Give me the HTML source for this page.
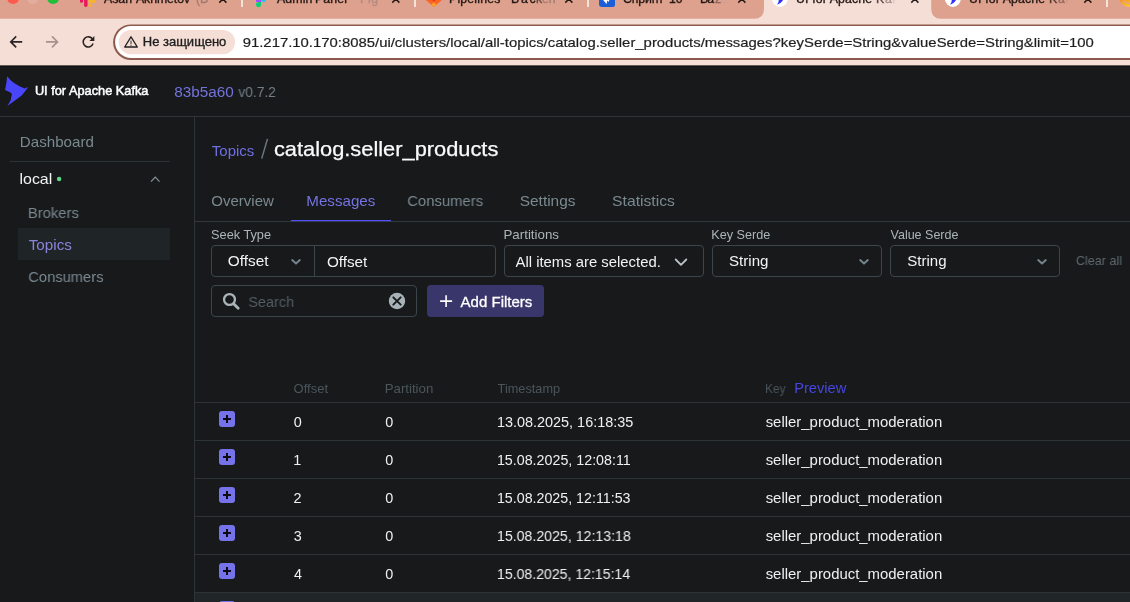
<!DOCTYPE html>
<html>
<head>
<meta charset="utf-8">
<title>UI for Apache Kafka</title>
<style>
html,body{margin:0;padding:0;}
body{width:1130px;height:602px;overflow:hidden;background:#18191b;font-family:"Liberation Sans",sans-serif;position:relative;}
.a{position:absolute;white-space:nowrap;line-height:1;}
div[id]{will-change:transform;}
.tabtxt{font-size:13px;color:#241815;top:-7.5px;letter-spacing:0.35px;}
.fade{color:#b98d82;}
.box{position:absolute;box-sizing:border-box;border:1px solid #3b464a;border-radius:4px;}
.hl{position:absolute;height:1px;background:#2c3437;}
.plus{position:absolute;left:219px;width:16px;height:16px;border-radius:3px;background:#7673ea;}
.plus:before{content:"";position:absolute;left:4.2px;top:7.1px;width:7.6px;height:1.8px;background:#0b0b10;}
.plus:after{content:"";position:absolute;left:7.1px;top:4.2px;width:1.8px;height:7.6px;background:#0b0b10;}
</style>
</head>
<body>
<!-- ===== Browser chrome (svg, fractional coords) ===== -->
<svg class="a" style="left:0;top:0;" width="1130" height="68" viewBox="0 0 1130 68">
  <rect x="0" y="0" width="1130" height="65.6" fill="#f5ded6"/>
  <rect x="0" y="65.6" width="1130" height="1.4" fill="#0e1012"/>
  <!-- salmon strip left/right of active tab -->
  <path d="M0 0 H764 V8.75 Q764 18.75 754 18.75 H0 Z" fill="#dea18e"/>
  <path d="M1130 0 H931.2 V8.75 Q931.2 18.75 941.2 18.75 H1130 Z" fill="#dea18e"/>
  <!-- traffic lights -->
  <circle cx="13.1" cy="-2.1" r="6" fill="#ff5a4f"/>
  <circle cx="32.9" cy="-2.1" r="6" fill="#e3ad9e"/>
  <circle cx="53.1" cy="-2.1" r="6" fill="#22bf3a"/>
  <!-- tab separators -->
  <rect x="241" y="-1" width="2" height="8" fill="#f4e2dc"/>
  <rect x="414" y="-1" width="2" height="8" fill="#f4e2dc"/>
  <rect x="587" y="-1" width="2" height="8" fill="#f4e2dc"/>
  <rect x="1106" y="-1" width="2" height="8" fill="#f4e2dc"/>
  <!-- slack favicon (bottom part) -->
  <rect x="80" y="-3" width="3.1" height="5.7" rx="1.55" fill="#e8185a"/>
  <rect x="84.1" y="-3" width="3.45" height="10" rx="1.7" fill="#e8185a"/>
  <rect x="88.5" y="-1" width="7.4" height="3.7" rx="1.7" fill="#f5b52a"/>
  <rect x="88.5" y="3.6" width="3.4" height="3.4" rx="1.7" fill="#f5b52a"/>
  <!-- figma favicon -->
  <rect x="256" y="-3" width="5" height="5" fill="#a64dff"/>
  <circle cx="263.55" cy="-0.45" r="2.55" fill="#18c2ff"/>
  <path d="M261 2 V4.6 a2.5 2.6 0 0 1 -5 0 a2.5 2.6 0 0 1 2.5 -2.6 Z" fill="#0bd078"/>
  <!-- gitlab favicon -->
  <path d="M425.8 0 L433.9 7 L442 0 V-4 H425.8 Z" fill="#fc6424"/>
  <path d="M431.6 -1 L433.9 2.1 L436.2 -1 Z" fill="#dc3a25"/>
  <path d="M433.9 2.3 L436.6 4.65 L433.9 7 L431.2 4.65 Z" fill="#fca024"/>
  <!-- jira favicon -->
  <path d="M599 -4 H615 V4.5 a2.5 2.5 0 0 1 -2.5 2.5 H601.5 a2.5 2.5 0 0 1 -2.5 -2.5 Z" fill="#1a5fd8"/>
  <path d="M602.2 -1 L606.6 4.1 L607.4 0.6 L608.8 2 L609.6 -1 Z" fill="#ffffff"/>
  <!-- kafka-ui favicons -->
  <circle cx="779.9" cy="-1" r="7.9" fill="#ffffff"/>
  <path d="M778.9 -1 L783.4 -1 L782.6 0.8 L780.5 3 L777.1 4.8 L778.5 2 Z" fill="#3030ff"/>
  <circle cx="952.9" cy="-1" r="7.9" fill="#ffffff"/>
  <path d="M951.9 -1 L956.4 -1 L955.6 0.8 L953.5 3 L950.1 4.8 L951.5 2 Z" fill="#3030ff"/>
  <!-- grafana favicon -->
  <defs><linearGradient id="gg" x1="0" y1="0" x2="0.4" y2="1"><stop offset="0.45" stop-color="#f6821f"/><stop offset="1" stop-color="#fdc52b"/></linearGradient></defs>
  <circle cx="1129.5" cy="-3.5" r="10.5" fill="url(#gg)"/>
  <circle cx="1129.5" cy="-3.5" r="7" fill="none" stroke="#e3a48d" stroke-width="1.4"/>
  <!-- close X glyphs (bottom halves) -->
  <g stroke="#241815" stroke-width="1.5" stroke-linecap="butt">
    <path d="M219.3 2.6 L226.4 -4.5 M226.4 2.6 L219.3 -4.5"/>
    <path d="M392.3 2.6 L399.4 -4.5 M399.4 2.6 L392.3 -4.5"/>
    <path d="M565.3 2.6 L572.4 -4.5 M572.4 2.6 L565.3 -4.5"/>
    <path d="M738.3 2.6 L745.4 -4.5 M745.4 2.6 L738.3 -4.5"/>
    <path d="M911.3 2.6 L918.4 -4.5 M918.4 2.6 L911.3 -4.5"/>
    <path d="M1084.3 2.6 L1091.4 -4.5 M1091.4 2.6 L1084.3 -4.5"/>
  </g>
  <!-- nav icons -->
  <g fill="none" stroke="#2b2422" stroke-width="1.6">
    <path d="M22.2 41.9 H11.4 M16.2 36.4 L10.7 41.9 L16.2 47.4"/>
    <path d="M92.6 39.2 A5.1 5.1 0 1 0 93.1 43.6"/>
  </g>
  <path d="M94.4 36 V41 H89.4 Z" fill="#2b2422"/>
  <g fill="none" stroke="#a8918b" stroke-width="1.6">
    <path d="M46 41.9 H56.8 M52 36.4 L57.5 41.9 L52 47.4"/>
  </g>
  <!-- omnibox -->
  <rect x="113.1" y="24.4" width="1060" height="35.6" rx="17.8" fill="#8c5b4d"/>
  <rect x="115.1" y="26" width="1060" height="32" rx="16" fill="#ffffff"/>
  <rect x="118.8" y="30" width="116.2" height="24.2" rx="12.1" fill="#f5ded6"/>
  <!-- warning triangle -->
  <path d="M131 36.8 L137.3 47 H124.7 Z" fill="none" stroke="#1f1f1f" stroke-width="1.3" stroke-linejoin="round"/>
  <rect x="130.4" y="40.6" width="1.2" height="3.4" fill="#555"/>
  <rect x="130.4" y="44.6" width="1.2" height="1.2" fill="#555"/>
</svg>

<!-- tab titles (cropped at top edge) -->

<!-- ===== App shell lines ===== -->
<div class="hl" style="left:0;top:116px;width:1130px;"></div>
<div class="a" style="left:194px;top:117px;width:1px;height:485px;background:#2c3437;"></div>
<svg class="a" style="left:0;top:70px;" width="40" height="40" viewBox="0 70 40 40"><path d="M7.2 76.3 Q10 80 13.3 82.6 Q18 86 24.6 88.6 L28.2 87.1 Q25 92 21.9 95.2 Q16 100 7.3 105.9 L10.6 100.6 L11.3 96.6 L12 94.6 Q11.5 93 10 92.3 L5 89.9 L6.3 83.3 Z" fill="#4946fa"/></svg>

<!-- sidebar -->
<div class="hl" style="left:10px;top:161px;width:160px;"></div>
<div class="a" style="left:18px;top:228px;width:152px;height:32px;background:#1f2426;"></div>
<svg class="a" style="left:50px;top:170px;" width="120" height="20" viewBox="50 170 120 20">
  <circle cx="59.1" cy="179" r="2.25" fill="#5cd685"/>
  <path d="M151 181.6 L155.25 177.2 L159.5 181.6" fill="none" stroke="#8b969b" stroke-width="1.15"/>
</svg>

<!-- breadcrumb slash -->
<svg class="a" style="left:258px;top:138px;" width="14" height="24" viewBox="258 138 14 24"><path d="M267.5 138.9 L261.7 158.6" stroke="#6a7880" stroke-width="1.5" fill="none"/></svg>

<!-- tabs line -->
<div class="hl" style="left:195px;top:221px;width:935px;background:#2f383c;"></div>
<div class="a" style="left:291px;top:220px;width:100px;height:1px;background:#5050ff;"></div>
<div class="a" style="left:291px;top:221px;width:100px;height:1px;background:#3a3f8a;opacity:.35;"></div>

<!-- filter boxes -->
<div class="box" style="left:211px;top:245px;width:285px;height:32px;"></div>
<div class="a" style="left:313.5px;top:246px;width:1px;height:30px;background:#3b464a;"></div>
<div class="box" style="left:504px;top:245px;width:200px;height:32px;"></div>
<div class="box" style="left:712px;top:245px;width:170px;height:32px;"></div>
<div class="box" style="left:890px;top:245px;width:170px;height:32px;"></div>
<div class="box" style="left:211px;top:285px;width:206px;height:32px;"></div>
<div class="a" style="left:427px;top:285px;width:117px;height:32px;border-radius:4px;background:#39366b;"></div>

<svg class="a" style="left:200px;top:250px;" width="900" height="70" viewBox="200 250 900 70">
  <g fill="none" stroke="#73848c" stroke-width="2" stroke-linecap="round" stroke-linejoin="round">
    <path d="M292.2 260.1 L296 263.6 L299.8 260.1"/>
    <path d="M860.2 260.1 L864 263.6 L867.8 260.1"/>
    <path d="M1038.2 260.1 L1042 263.6 L1045.8 260.1"/>
  </g>
  <path d="M675.7 259.5 L681 264.9 L686.3 259.5" fill="none" stroke="#b9c1c5" stroke-width="1.8" stroke-linecap="round" stroke-linejoin="round"/>
  <!-- search icon -->
  <circle cx="229.5" cy="299.5" r="5.45" fill="none" stroke="#abb5ba" stroke-width="2.3"/>
  <path d="M233.9 303.9 L238.2 308.2" stroke="#abb5ba" stroke-width="2.8" stroke-linecap="round"/>
  <!-- clear circle -->
  <circle cx="397" cy="301" r="8.2" fill="#a7b3b8"/>
  <path d="M393.3 297.3 L400.7 304.7 M400.7 297.3 L393.3 304.7" stroke="#18191b" stroke-width="1.9" stroke-linecap="round"/>
  <!-- plus in button -->
  <path d="M440.1 301.1 H452.1 M446.1 295.3 V306.9" stroke="#ffffff" stroke-width="1.6"/>
</svg>

<!-- table lines -->
<div class="hl" style="left:195px;top:402px;width:935px;"></div>
<div class="hl" style="left:195px;top:440px;width:935px;"></div>
<div class="hl" style="left:195px;top:478px;width:935px;"></div>
<div class="hl" style="left:195px;top:516px;width:935px;"></div>
<div class="hl" style="left:195px;top:554px;width:935px;"></div>
<div class="hl" style="left:195px;top:592px;width:935px;"></div>
<div class="a" style="left:195px;top:593px;width:935px;height:9px;background:#202627;"></div>
<div class="plus" style="top:411px;"></div>
<div class="plus" style="top:449px;"></div>
<div class="plus" style="top:487px;"></div>
<div class="plus" style="top:525px;"></div>
<div class="plus" style="top:563px;"></div>
<div class="plus" style="top:601px;"></div>

<div class="a" id="chip" style="left:142.00px;top:36.00px;font-size:12.3px;color:#1f1f1f;-webkit-text-stroke:0.35px #1f1f1f;transform:translateX(0.78px) scaleX(1.0566);transform-origin:0 0;">Не защищено</div>
<div class="a" id="url" style="left:242.00px;top:36.00px;font-size:13.6px;color:#1f1f1f;-webkit-text-stroke:0.2px #1f1f1f;transform:translateX(0.70px) scaleX(1.0939);transform-origin:0 0;">91.217.10.170:8085/ui/clusters/local/all-topics/catalog.seller_products/messages?keySerde=String&amp;valueSerde=String&amp;limit=100</div>
<div class="a" id="brand" style="left:34.00px;top:85.00px;font-size:12.6px;color:#ffffff;-webkit-text-stroke:0.5px #ffffff;transform:translateX(0.90px) scaleX(1.0138);transform-origin:0 0;">UI for Apache Kafka</div>
<div class="a" id="sha" style="left:174.00px;top:85.00px;font-size:14px;color:#7473dc;transform:translateX(0.22px) scaleX(1.0928);transform-origin:0 0;">83b5a60</div>
<div class="a" id="ver" style="left:238.00px;top:85.00px;font-size:14px;color:#73808a;transform:translateX(0.40px) scaleX(0.9822);transform-origin:0 0;">v0.7.2</div>
<div class="a" id="dash" style="left:19.00px;top:134.00px;font-size:15px;color:#7a8a91;transform:translateX(0.82px) scaleX(1.0089);transform-origin:0 0;">Dashboard</div>
<div class="a" id="local" style="left:19.00px;top:171.00px;font-size:15px;color:#f1f3f4;transform:translateX(0.50px) scaleX(1.0614);transform-origin:0 0;">local</div>
<div class="a" id="brok" style="left:27.00px;top:205.00px;font-size:15px;color:#7a8a91;transform:translateX(0.84px) scaleX(0.9872);transform-origin:0 0;">Brokers</div>
<div class="a" id="stop" style="left:28.00px;top:237.00px;font-size:15px;color:#8a84dc;transform:translateX(0.76px) scaleX(1.0140);transform-origin:0 0;">Topics</div>
<div class="a" id="scons" style="left:28.00px;top:269.00px;font-size:15px;color:#7a8a91;transform:translateX(0.31px) scaleX(0.9799);transform-origin:0 0;">Consumers</div>
<div class="a" id="ctop" style="left:211.00px;top:144.00px;font-size:14.6px;color:#6f6fe0;transform:translateX(0.87px) scaleX(1.0246);transform-origin:0 0;">Topics</div>
<div class="a" id="title" style="left:273.00px;top:139.00px;font-size:20.6px;color:#fafbfb;-webkit-text-stroke:0.25px #fafbfb;transform:translateX(0.92px) scaleX(1.0596);transform-origin:0 0;">catalog.seller_products</div>
<div class="a" id="t1" style="left:211.00px;top:193.00px;font-size:15px;color:#7a8a91;transform:translateX(0.30px) scaleX(1.0001);transform-origin:0 0;">Overview</div>
<div class="a" id="t2" style="left:306.00px;top:193.00px;font-size:15px;color:#7473e2;transform:translateX(0.32px) scaleX(1.0086);transform-origin:0 0;">Messages</div>
<div class="a" id="t3" style="left:407.00px;top:193.00px;font-size:15px;color:#7a8a91;transform:translateX(0.31px) scaleX(0.9878);transform-origin:0 0;">Consumers</div>
<div class="a" id="t4" style="left:519.00px;top:193.00px;font-size:15px;color:#7a8a91;transform:translateX(0.72px) scaleX(1.0289);transform-origin:0 0;">Settings</div>
<div class="a" id="t5" style="left:612.00px;top:193.00px;font-size:15px;color:#7a8a91;transform:translateX(0.11px) scaleX(1.0461);transform-origin:0 0;">Statistics</div>
<div class="a" id="l1" style="left:211.00px;top:229.00px;font-size:12.4px;color:#abb5ba;transform:translateX(0.10px) scaleX(1.0277);transform-origin:0 0;">Seek Type</div>
<div class="a" id="l2" style="left:503.00px;top:229.00px;font-size:12.4px;color:#abb5ba;transform:translateX(0.46px) scaleX(1.0748);transform-origin:0 0;">Partitions</div>
<div class="a" id="l3" style="left:711.00px;top:229.00px;font-size:12.4px;color:#abb5ba;transform:translateX(0.21px) scaleX(1.0207);transform-origin:0 0;">Key Serde</div>
<div class="a" id="l4" style="left:890.00px;top:229.00px;font-size:12.4px;color:#abb5ba;transform:translateX(0.50px) scaleX(1.0101);transform-origin:0 0;">Value Serde</div>
<div class="a" id="i1" style="left:227.00px;top:254.00px;font-size:14.8px;color:#f1f3f4;transform:translateX(0.78px) scaleX(1.0397);transform-origin:0 0;">Offset</div>
<div class="a" id="i2" style="left:326.00px;top:255.00px;font-size:14.8px;color:#f1f3f4;transform:translateX(0.88px) scaleX(1.0319);transform-origin:0 0;">Offset</div>
<div class="a" id="i3" style="left:515.00px;top:255.00px;font-size:14.8px;color:#f1f3f4;transform:translateX(0.50px) scaleX(1.0040);transform-origin:0 0;">All items are selected.</div>
<div class="a" id="i4" style="left:729.00px;top:254.00px;font-size:14.8px;color:#f1f3f4;transform:translateX(0.03px) scaleX(1.0196);transform-origin:0 0;">String</div>
<div class="a" id="i5" style="left:907.00px;top:254.00px;font-size:14.8px;color:#f1f3f4;transform:translateX(0.33px) scaleX(1.0142);transform-origin:0 0;">String</div>
<div class="a" id="clr" style="left:1075.00px;top:254.00px;font-size:13.2px;color:#5d696f;transform:translateX(0.91px) scaleX(0.9525);transform-origin:0 0;">Clear all</div>
<div class="a" id="srch" style="left:248.00px;top:295.00px;font-size:14.8px;color:#525e64;transform:translateX(0.35px) scaleX(0.9759);transform-origin:0 0;">Search</div>
<div class="a" id="addf" style="left:460.00px;top:295.00px;font-size:14.6px;color:#ffffff;-webkit-text-stroke:0.3px #ffffff;transform:translateX(0.60px) scaleX(1.0285);transform-origin:0 0;">Add Filters</div>
<div class="a" id="h1" style="left:293.00px;top:383.00px;font-size:12.4px;color:#4a565c;transform:translateX(0.49px) scaleX(1.0522);transform-origin:0 0;">Offset</div>
<div class="a" id="h2" style="left:384.00px;top:383.00px;font-size:12.4px;color:#4a565c;transform:translateX(0.66px) scaleX(1.0702);transform-origin:0 0;">Partition</div>
<div class="a" id="h3" style="left:497.00px;top:383.00px;font-size:12.4px;color:#4a565c;transform:translateX(0.60px) scaleX(1.0272);transform-origin:0 0;">Timestamp</div>
<div class="a" id="h4" style="left:764.00px;top:383.00px;font-size:12.4px;color:#4a565c;transform:translateX(0.96px) scaleX(0.9658);transform-origin:0 0;">Key</div>
<div class="a" id="h5" style="left:794.00px;top:381.00px;font-size:14.6px;color:#4646e0;transform:translateX(0.15px) scaleX(1.0066);transform-origin:0 0;">Preview</div>
<div class="a" id="r0o" style="left:293.00px;top:415.00px;font-size:14.4px;color:#eef0f1;transform:translateX(0.65px) scaleX(1.0000);transform-origin:0 0;">0</div>
<div class="a" id="r0p" style="left:385.00px;top:415.00px;font-size:14.4px;color:#eef0f1;transform:translateX(0.25px) scaleX(1.0000);transform-origin:0 0;">0</div>
<div class="a" id="r0t" style="left:496.00px;top:415.00px;font-size:14.2px;color:#eef0f1;transform:translateX(0.90px) scaleX(1.0168);transform-origin:0 0;">13.08.2025, 16:18:35</div>
<div class="a" id="r0k" style="left:765.00px;top:415.00px;font-size:14.2px;color:#eef0f1;transform:translateX(0.67px) scaleX(1.0508);transform-origin:0 0;">seller_product_moderation</div>
<div class="a" id="r1o" style="left:293.00px;top:453.00px;font-size:14.4px;color:#eef0f1;transform:translateX(0.20px) scaleX(1.0000);transform-origin:0 0;">1</div>
<div class="a" id="r1p" style="left:385.00px;top:453.00px;font-size:14.4px;color:#eef0f1;transform:translateX(0.25px) scaleX(1.0000);transform-origin:0 0;">0</div>
<div class="a" id="r1t" style="left:496.00px;top:453.00px;font-size:14.2px;color:#eef0f1;transform:translateX(0.91px) scaleX(1.0059);transform-origin:0 0;">15.08.2025, 12:08:11</div>
<div class="a" id="r1k" style="left:765.00px;top:453.00px;font-size:14.2px;color:#eef0f1;transform:translateX(0.67px) scaleX(1.0508);transform-origin:0 0;">seller_product_moderation</div>
<div class="a" id="r2o" style="left:293.00px;top:491.00px;font-size:14.4px;color:#eef0f1;transform:translateX(0.43px) scaleX(1.0000);transform-origin:0 0;">2</div>
<div class="a" id="r2p" style="left:385.00px;top:491.00px;font-size:14.4px;color:#eef0f1;transform:translateX(0.25px) scaleX(1.0000);transform-origin:0 0;">0</div>
<div class="a" id="r2t" style="left:496.00px;top:491.00px;font-size:14.2px;color:#eef0f1;transform:translateX(0.91px) scaleX(1.0037);transform-origin:0 0;">15.08.2025, 12:11:53</div>
<div class="a" id="r2k" style="left:765.00px;top:491.00px;font-size:14.2px;color:#eef0f1;transform:translateX(0.67px) scaleX(1.0508);transform-origin:0 0;">seller_product_moderation</div>
<div class="a" id="r3o" style="left:293.00px;top:529.00px;font-size:14.4px;color:#eef0f1;transform:translateX(0.65px) scaleX(1.0000);transform-origin:0 0;">3</div>
<div class="a" id="r3p" style="left:385.00px;top:529.00px;font-size:14.4px;color:#eef0f1;transform:translateX(0.25px) scaleX(1.0000);transform-origin:0 0;">0</div>
<div class="a" id="r3t" style="left:496.00px;top:529.00px;font-size:14.2px;color:#eef0f1;transform:translateX(0.91px) scaleX(0.9980);transform-origin:0 0;">15.08.2025, 12:13:18</div>
<div class="a" id="r3k" style="left:765.00px;top:529.00px;font-size:14.2px;color:#eef0f1;transform:translateX(0.67px) scaleX(1.0508);transform-origin:0 0;">seller_product_moderation</div>
<div class="a" id="r4o" style="left:293.00px;top:567.00px;font-size:14.4px;color:#eef0f1;transform:translateX(0.88px) scaleX(1.0000);transform-origin:0 0;">4</div>
<div class="a" id="r4p" style="left:385.00px;top:567.00px;font-size:14.4px;color:#eef0f1;transform:translateX(0.25px) scaleX(1.0000);transform-origin:0 0;">0</div>
<div class="a" id="r4t" style="left:496.00px;top:567.00px;font-size:14.2px;color:#eef0f1;transform:translateX(0.92px) scaleX(0.9940);transform-origin:0 0;">15.08.2025, 12:15:14</div>
<div class="a" id="r4k" style="left:765.00px;top:567.00px;font-size:14.2px;color:#eef0f1;transform:translateX(0.67px) scaleX(1.0508);transform-origin:0 0;">seller_product_moderation</div>
<div class="a" id="tb1a" style="left:104.20px;top:-7.01px;font-size:12.3px;color:#241815;-webkit-text-stroke:0.35px #241815;transform:translateY(0.45px) scaleX(1.0004);transform-origin:0 0;letter-spacing:-0.015px;">Asan</div>
<div class="a" id="tb1b" style="left:136.20px;top:-7.01px;font-size:12.3px;color:#241815;-webkit-text-stroke:0.35px #241815;transform:translateY(0.45px) scaleX(1.0004);transform-origin:0 0;letter-spacing:-0.084px;">Akhmetov</div>
<div class="a" id="tb1c" style="left:195.92px;top:-7.01px;font-size:12.3px;color:#a27c72;-webkit-text-stroke:0.35px #a27c72;transform:translateY(0.45px) scaleX(1.0004);transform-origin:0 0;">(D</div>
<div class="a" id="tb2a" style="left:277.20px;top:-7.01px;font-size:12.3px;color:#241815;-webkit-text-stroke:0.35px #241815;transform:translateY(0.45px) scaleX(1.0004);transform-origin:0 0;letter-spacing:0.132px;">Admin</div>
<div class="a" id="tb2b" style="left:315.24px;top:-7.01px;font-size:12.3px;color:#241815;-webkit-text-stroke:0.35px #241815;transform:translateY(0.45px) scaleX(1.0004);transform-origin:0 0;letter-spacing:0.103px;">Panel</div>
<div class="a" id="tb2c" style="left:359.54px;top:-7.01px;font-size:12.3px;color:#b48b80;-webkit-text-stroke:0.35px #b48b80;transform:translateY(0.45px) scaleX(1.0004);transform-origin:0 0;letter-spacing:0.532px;">Fig</div>
<div class="a" id="tb3a" style="left:449.44px;top:-7.01px;font-size:12.3px;color:#241815;-webkit-text-stroke:0.35px #241815;transform:translateY(0.45px) scaleX(1.0004);transform-origin:0 0;letter-spacing:0.179px;">Pipelines</div>
<div class="a" id="tb3b" style="left:510.94px;top:-7.01px;font-size:12.3px;color:#241815;-webkit-text-stroke:0.35px #241815;transform:translateY(0.45px) scaleX(1.0004);transform-origin:0 0;letter-spacing:1.779px;">Bac</div>
<div class="a" id="tb3c" style="left:535.53px;top:-7.01px;font-size:12.3px;color:#6d4c44;-webkit-text-stroke:0.35px #6d4c44;transform:translateY(0.45px) scaleX(1.0004);transform-origin:0 0;">k</div>
<div class="a" id="tb3d" style="left:541.52px;top:-7.01px;font-size:12.3px;color:#a27c72;-webkit-text-stroke:0.35px #a27c72;transform:translateY(0.45px) scaleX(1.0004);transform-origin:0 0;">en</div>
<div class="a" id="tb4a" style="left:623.22px;top:-7.01px;font-size:12.3px;color:#241815;-webkit-text-stroke:0.35px #241815;transform:translateY(0.45px) scaleX(1.0004);transform-origin:0 0;letter-spacing:-0.149px;">Спринт</div>
<div class="a" id="tb4b" style="left:668.93px;top:-7.01px;font-size:12.3px;color:#241815;-webkit-text-stroke:0.35px #241815;transform:translateY(0.45px) scaleX(1.0004);transform-origin:0 0;letter-spacing:-0.206px;">10</div>
<div class="a" id="tb4c" style="left:700.34px;top:-7.01px;font-size:12.3px;color:#241815;-webkit-text-stroke:0.35px #241815;transform:translateY(0.45px) scaleX(1.0004);transform-origin:0 0;letter-spacing:-0.862px;">Ba</div>
<div class="a" id="tb4d" style="left:714.82px;top:-7.01px;font-size:12.3px;color:#8a665d;-webkit-text-stroke:0.35px #8a665d;transform:translateY(0.45px) scaleX(1.0004);transform-origin:0 0;">z</div>
<div class="a" id="tb4e" style="left:720.62px;top:-7.01px;font-size:12.3px;color:#d09f93;-webkit-text-stroke:0.35px #d09f93;transform:translateY(0.45px) scaleX(1.0004);transform-origin:0 0;">e</div>
<div class="a" id="tb5a" style="left:796.03px;top:-7.01px;font-size:12.3px;color:#241815;-webkit-text-stroke:0.35px #241815;transform:translateY(0.45px) scaleX(1.0004);transform-origin:0 0;letter-spacing:0.138px;">UI for Apache</div>
<div class="a" id="tb5b" style="left:875.74px;top:-7.01px;font-size:12.3px;color:#5e4a45;-webkit-text-stroke:0.35px #5e4a45;transform:translateY(0.45px) scaleX(1.0004);transform-origin:0 0;">K</div>
<div class="a" id="tb5c" style="left:884.62px;top:-7.01px;font-size:12.3px;color:#a48f89;-webkit-text-stroke:0.35px #a48f89;transform:translateY(0.45px) scaleX(1.0004);transform-origin:0 0;">a</div>
<div class="a" id="tb5d" style="left:892.00px;top:-7.01px;font-size:12.3px;color:#dcc6be;-webkit-text-stroke:0.35px #dcc6be;transform:translateY(0.45px) scaleX(1.0004);transform-origin:0 0;">f</div>
<div class="a" id="tb6a" style="left:969.03px;top:-7.01px;font-size:12.3px;color:#241815;-webkit-text-stroke:0.35px #241815;transform:translateY(0.45px) scaleX(1.0004);transform-origin:0 0;letter-spacing:0.138px;">UI for Apache</div>
<div class="a" id="tb6b" style="left:1048.74px;top:-7.01px;font-size:12.3px;color:#54382f;-webkit-text-stroke:0.35px #54382f;transform:translateY(0.45px) scaleX(1.0004);transform-origin:0 0;">K</div>
<div class="a" id="tb6c" style="left:1057.62px;top:-7.01px;font-size:12.3px;color:#96695d;-webkit-text-stroke:0.35px #96695d;transform:translateY(0.45px) scaleX(1.0004);transform-origin:0 0;">a</div>
<div class="a" id="tb6d" style="left:1065.00px;top:-7.01px;font-size:12.3px;color:#cf9887;-webkit-text-stroke:0.35px #cf9887;transform:translateY(0.45px) scaleX(1.0004);transform-origin:0 0;">f</div>
</body>
</html>
